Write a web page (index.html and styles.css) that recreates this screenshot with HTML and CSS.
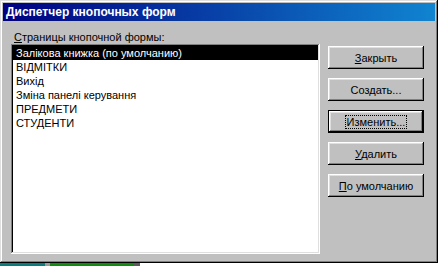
FILE: index.html
```html
<!DOCTYPE html>
<html lang="ru">
<head>
    <meta charset="UTF-8">
    <title>Диспетчер кнопочных форм</title>
    <link rel="stylesheet" href="styles.css">
</head>
<body>
    <div class="window">
        <div class="title-bar">Диспетчер кнопочных форм</div>
        <div class="window-body">
            <div class="left-content">
                <div class="field-label"><u>С</u>траницы кнопочной формы:</div>
                <div class="list-box">
                    <div class="list-item selected">Залікова книжка (по умолчанию)</div>
                    <div class="list-item">ВІДМІТКИ</div>
                    <div class="list-item">Вихід</div>
                    <div class="list-item">Зміна панелі керування</div>
                    <div class="list-item">ПРЕДМЕТИ</div>
                    <div class="list-item">СТУДЕНТИ</div>
                </div>
            </div>
            <div class="button-column">
                <button class="btn"><u>З</u>акрыть</button>
                <button class="btn">Соз<u>д</u>ать...</button>
                <button class="btn btn-default"><span class="focus-ring">Изменить...</span></button>
                <button class="btn"><u>У</u>далить</button>
                <button class="btn"><u>П</u>о умолчанию</button>
            </div>
        </div>
    </div>
    <div class="desk-strip">
        <span class="strip-teal"></span>
        <span class="strip-gray"></span>
        <span class="strip-green"></span>
        <span class="strip-dark"></span>
    </div>
</body>
</html>
```

FILE: styles.css
```css
body { margin: 0; background: #fff; font-family: "Liberation Sans", Arial, sans-serif; font-size: 11px; color: #000; }
u { text-decoration: underline; text-underline-offset: 1px; }

.window { width: 438px; height: 263px; box-sizing: border-box; padding: 3px; background: #c0c0c0; display: flex; flex-direction: column;
    box-shadow: inset -1px -1px #000, inset 1px 1px #dfdfdf, inset -2px -2px #808080, inset 2px 2px #fff; }
.title-bar { height: 18px; line-height: 18px; padding-left: 3px; color: #fff; font-weight: bold; font-size: 12px;
    background: linear-gradient(90deg, #000080, #1084d0); }

.window-body { display: flex; gap: 8px; padding: 10px 0 0 8px; }
.left-content { display: flex; flex-direction: column; }
.field-label { height: 13px; line-height: 13px; padding-left: 3px; }
.list-box { width: 309px; height: 210px; box-sizing: border-box; padding: 2px; background: #fff;
    box-shadow: inset -1px -1px #fff, inset 1px 1px #808080, inset -2px -2px #dfdfdf, inset 2px 2px #000; }
.list-item { height: 14px; line-height: 14px; padding-left: 3px; white-space: nowrap; }
.list-item.selected { background: #000; color: #fff; }

.button-column { display: flex; flex-direction: column; gap: 9px; margin-top: 15px; }
.btn { width: 96px; height: 23px; padding: 0; border: none; background: #c0c0c0; font: inherit; color: #000;
    box-shadow: inset -1px -1px #000, inset 1px 1px #fff, inset -2px -2px #808080, inset 2px 2px #dfdfdf; }
.btn-default { box-shadow: inset 0 0 0 1px #000, inset -2px -2px #000, inset 2px 2px #fff, inset -3px -3px #808080, inset 3px 3px #dfdfdf; }
.focus-ring { display: inline-block; padding: 0 1px; line-height: 12px; outline: 1px dotted #000; outline-offset: 0; }

.desk-strip { display: flex; height: 3px; }
.desk-strip span { display: block; height: 100%; }
.strip-teal { width: 45px; background: #0b7b7b; }
.strip-gray { width: 5px; background: #9a9a9a; }
.strip-green { width: 83px; background: #138a13; }
.strip-dark { width: 7px; background: #5a5a5a; }
```
